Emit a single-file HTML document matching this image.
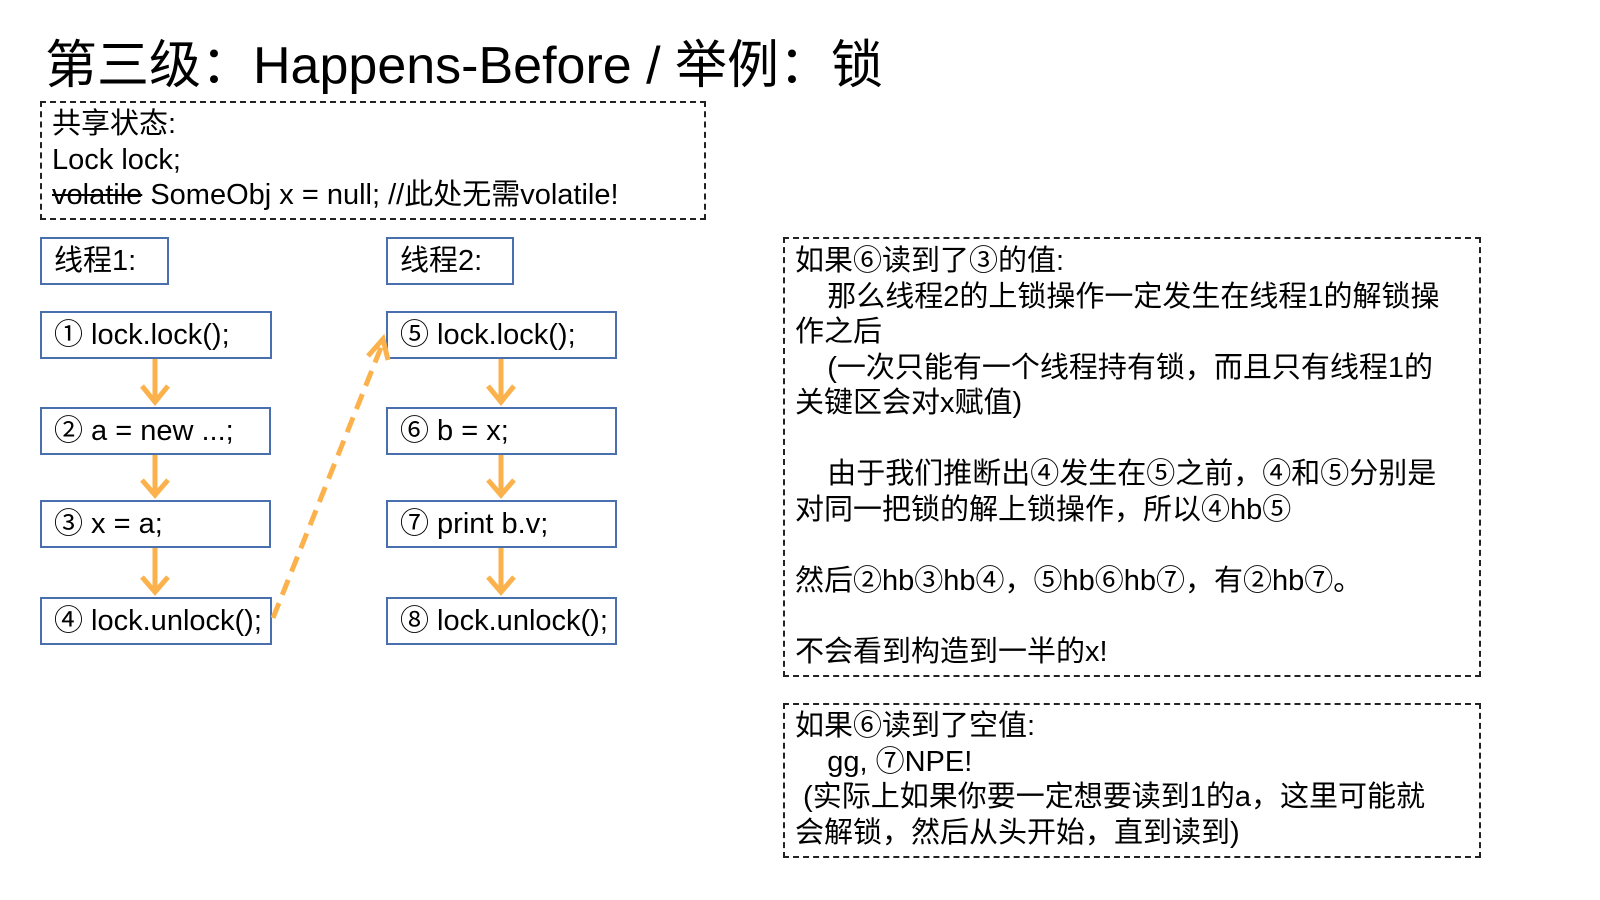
<!DOCTYPE html>
<html><head><meta charset="utf-8"><style>
body{margin:0;width:1600px;height:900px;background:#fff;position:relative;overflow:hidden;font-family:"Liberation Sans","Noto Sans CJK SC",sans-serif;color:#000}
.a{position:absolute;white-space:nowrap}
.b{position:absolute;border:2px solid #4a6fae;box-sizing:border-box;font-size:29px;line-height:44px;padding-left:12px;white-space:nowrap}
.d{position:absolute;border:2px dashed #222;box-sizing:border-box}
.t{position:absolute;font-size:29px;line-height:35.5px;white-space:nowrap}
</style></head><body>
<div class="a" style="left:45px;top:34px;font-size:52px;line-height:64px">第三级：Happens-Before / 举例：锁</div>
<div class="d" style="left:40px;top:101px;width:666px;height:119px"></div>
<div class="t" style="left:52px;top:107px">共享状态:<br>Lock lock;<br><s>volatile</s> SomeObj x = null; //此处无需volatile!</div>

<div class="b" style="left:40px;top:237px;width:129px;height:48px">线程1:</div>
<div class="b" style="left:386px;top:237px;width:128px;height:48px">线程2:</div>

<div class="b" style="left:40px;top:311px;width:232px;height:48px">① lock.lock();</div>
<div class="b" style="left:40px;top:407px;width:231px;height:48px">② a = new ...;</div>
<div class="b" style="left:40px;top:500px;width:231px;height:48px">③ x = a;</div>
<div class="b" style="left:40px;top:597px;width:232px;height:48px">④ lock.unlock();</div>
<div class="b" style="left:386px;top:311px;width:231px;height:48px">⑤ lock.lock();</div>
<div class="b" style="left:386px;top:407px;width:231px;height:48px">⑥ b = x;</div>
<div class="b" style="left:386px;top:500px;width:231px;height:48px">⑦ print b.v;</div>
<div class="b" style="left:386px;top:597px;width:231px;height:48px">⑧ lock.unlock();</div>

<svg class="a" style="left:0;top:0" width="1600" height="900">
<g stroke="#fbb24c" stroke-width="5" fill="none" stroke-linejoin="miter">
<path d="M155 359V402M142 386L155 402L168 386"/>
<path d="M155 455V495M142 480L155 495L168 480"/>
<path d="M155 548V592M142 577L155 592L168 577"/>
<path d="M501 359V402M488 386L501 402L514 386"/>
<path d="M501 455V495M488 480L501 495L514 480"/>
<path d="M501 548V592M488 577L501 592L514 577"/>
<path d="M273 618L382 345" stroke-dasharray="16 9"/>
<path d="M368 356L383 339L388 360"/>
</g></svg>

<div class="d" style="left:783px;top:237px;width:698px;height:440px"></div>
<div class="t" style="left:795px;top:244px">如果⑥读到了③的值:<br>&nbsp;&nbsp;&nbsp;&nbsp;那么线程2的上锁操作一定发生在线程1的解锁操<br>作之后<br>&nbsp;&nbsp;&nbsp;&nbsp;(一次只能有一个线程持有锁，而且只有线程1的<br>关键区会对x赋值)<br><br>&nbsp;&nbsp;&nbsp;&nbsp;由于我们推断出④发生在⑤之前，④和⑤分别是<br>对同一把锁的解上锁操作，所以④hb⑤<br><br>然后②hb③hb④，⑤hb⑥hb⑦，有②hb⑦。<br><br>不会看到构造到一半的x!</div>

<div class="d" style="left:783px;top:703px;width:698px;height:155px"></div>
<div class="t" style="left:795px;top:709px">如果⑥读到了空值:<br>&nbsp;&nbsp;&nbsp;&nbsp;gg, ⑦NPE!<br>&nbsp;(实际上如果你要一定想要读到1的a，这里可能就<br>会解锁，然后从头开始，直到读到)</div>
</body></html>
